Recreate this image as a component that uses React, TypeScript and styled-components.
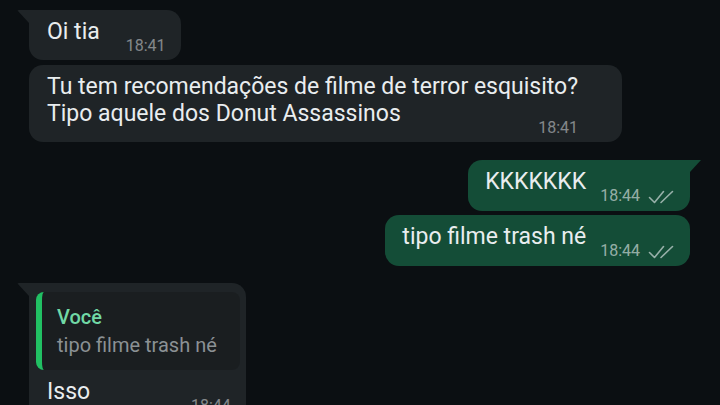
import React from 'react'
import styled, { createGlobalStyle, css } from 'styled-components'

const GlobalStyle = createGlobalStyle`
  html, body {
    margin: 0;
    background: #0b0f12;
  }
  body {
    font-family: Roboto, 'Noto Sans', sans-serif;
    -webkit-font-smoothing: antialiased;
  }
`

const Chat = styled.main`
  height: 405px;
  overflow: hidden;
  box-sizing: border-box;
  padding-top: 10px;
  display: flex;
  flex-direction: column;
`

const Row = styled.div<{ $out?: boolean; $gap?: number }>`
  display: flex;
  justify-content: ${p => (p.$out ? 'flex-end' : 'flex-start')};
  padding: 0 30px 0 29px;
  margin-top: ${p => p.$gap ?? 0}px;
`

const incomingTail = css`
  border-top-left-radius: 0;
  &::before {
    content: '';
    position: absolute;
    top: 0;
    left: -12px;
    width: 12px;
    height: 13px;
    background: inherit;
    clip-path: polygon(0 0, 100% 0, 100% 100%);
    border-top-left-radius: 2px;
  }
`

const outgoingTail = css`
  border-top-right-radius: 0;
  &::before {
    content: '';
    position: absolute;
    top: 0;
    right: -11px;
    width: 11px;
    height: 12px;
    background: inherit;
    clip-path: polygon(0 0, 100% 0, 0 100%);
  }
`

const Bubble = styled.div<{ $out?: boolean; $tail?: boolean; $extra?: number }>`
  position: relative;
  max-width: 620px;
  padding: 8px ${p => 15 + (p.$extra ?? 0)}px ${p => (p.$out ? 6 : 5)}px
    ${p => (p.$out ? 17 : 18)}px;
  border-radius: 14px;
  background: ${p => (p.$out ? '#144d37' : '#1f2427')};
  color: #e9edef;
  font-size: 23px;
  line-height: 27px;
  ${p => p.$tail && (p.$out ? outgoingTail : incomingTail)}
`

const Meta = styled.span<{ $out?: boolean }>`
  float: right;
  display: flex;
  align-items: flex-end;
  gap: 8px;
  margin: 18px 0 0 ${p => (p.$out ? 14 : 26)}px;
  font-size: 16px;
  line-height: 19px;
  color: ${p => (p.$out ? 'rgba(233, 237, 239, 0.62)' : 'rgba(233, 237, 239, 0.5)')};
`

const TickIcon = styled.svg`
  margin-bottom: 1px;
`

const Quote = styled.div`
  margin: 1px -9px 8px -11px;
  padding: 13px 23px 13px 15px;
  border-left: 6px solid #21c063;
  border-radius: 8px;
  background: rgba(0, 0, 0, 0.16);
`

const QuoteName = styled.div`
  font-size: 20px;
  line-height: 24px;
  font-weight: 500;
  color: #71d9a6;
`

const QuoteText = styled.div`
  margin-top: 4px;
  font-size: 20px;
  line-height: 24px;
  color: #8b9194;
`

// double check mark shown next to the time of sent messages
const Ticks = () => (
  <TickIcon
    width="27"
    height="14"
    viewBox="0 0 27 14"
    fill="none"
    stroke="currentColor"
    strokeWidth="1.6"
    strokeLinecap="round"
    strokeLinejoin="round"
  >
    <path d="M1.5 7.5 L6.5 12.5 L15.5 1.5" />
    <path d="M13 12.5 L24.5 1.5" />
  </TickIcon>
)

export default function App() {
  return (
    <>
      <GlobalStyle />
      <Chat>
        <Row>
          <Bubble $tail>
            Oi tia
            <Meta>18:41</Meta>
          </Bubble>
        </Row>

        <Row $gap={5}>
          <Bubble $extra={29}>
            Tu tem recomendações de filme de terror esquisito?
            <br />
            Tipo aquele dos Donut Assassinos
            <Meta>18:41</Meta>
          </Bubble>
        </Row>

        <Row $out $gap={18}>
          <Bubble $out $tail>
            KKKKKKK
            <Meta $out>
              18:44
              <Ticks />
            </Meta>
          </Bubble>
        </Row>

        <Row $out $gap={4}>
          <Bubble $out>
            tipo filme trash né
            <Meta $out>
              18:44
              <Ticks />
            </Meta>
          </Bubble>
        </Row>

        <Row $gap={17}>
          <Bubble $tail>
            <Quote>
              <QuoteName>Você</QuoteName>
              <QuoteText>tipo filme trash né</QuoteText>
            </Quote>
            Isso
            <Meta>18:44</Meta>
          </Bubble>
        </Row>
      </Chat>
    </>
  )
}
